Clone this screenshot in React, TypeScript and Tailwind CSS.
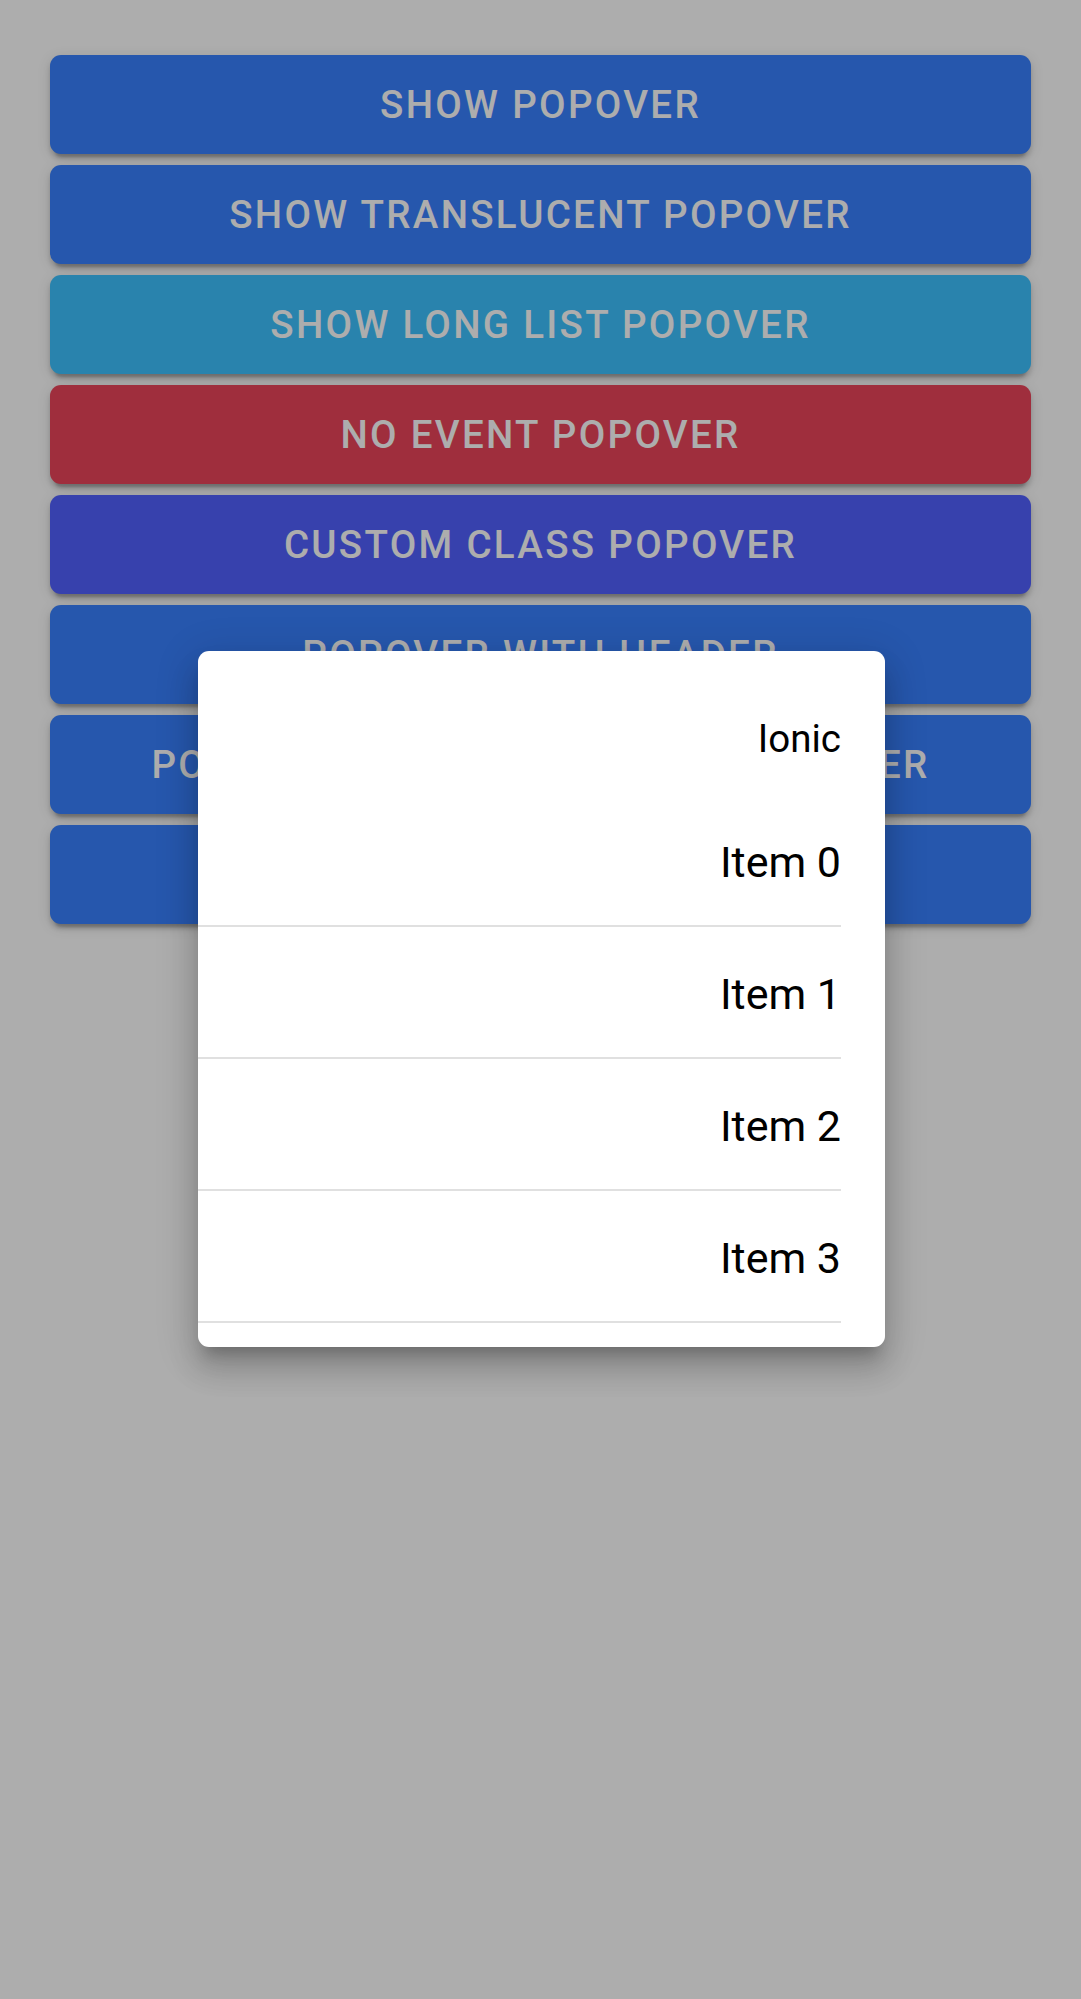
import React from "react";

type Btn = {
  label: string;
  color: string;
};

const buttons: Btn[] = [
  { label: "Show Popover", color: "bg-[#3880ff]" },
  { label: "Show Translucent Popover", color: "bg-[#3880ff]" },
  { label: "Show Long List Popover", color: "bg-[#3dc2ff]" },
  { label: "No Event Popover", color: "bg-[#eb445a]" },
  { label: "Custom Class Popover", color: "bg-[#5260ff]" },
  { label: "Popover With Header", color: "bg-[#3880ff]" },
  { label: "Popover With Translucent Header", color: "bg-[#3880ff]" },
  { label: "Popover With Textarea", color: "bg-[#3880ff]" },
];

// only the rows that show inside the popover before it is clipped
const items = ["Item 0", "Item 1", "Item 2", "Item 3", ""];

function PageButton({ label, color }: Btn) {
  return (
    <button
      className={`${color} h-[99px] w-full rounded-[11px] text-white uppercase font-medium text-[38.5px] tracking-[0.06em] shadow-[0_8px_3px_-5px_rgba(0,0,0,0.2),0_5px_5px_0_rgba(0,0,0,0.14),0_3px_14px_0_rgba(0,0,0,0.12)]`}
      style={{ fontFamily: "Roboto, 'Noto Sans', sans-serif" }}
    >
      {label}
    </button>
  );
}

function ListPopover() {
  return (
    <div
      className="absolute left-[198px] top-[651px] w-[687px] h-[696px] bg-white rounded-[11px] overflow-hidden shadow-[0_14px_14px_-8px_rgba(0,0,0,0.2),0_22px_28px_3px_rgba(0,0,0,0.14),0_8px_40px_6px_rgba(0,0,0,0.12)]"
      style={{ fontFamily: "Roboto, 'Noto Sans', sans-serif" }}
      dir="rtl"
    >
      {/* list header */}
      <div className="h-[144px] pr-[44px] pt-[66px] text-[38.5px] leading-[44px] text-black">Ionic</div>
      {items.map((item, i) => (
        <div key={i} className="h-[132px] flex">
          <div className="flex-1 mr-[44px] flex items-center pt-[5px] border-b-2 border-[#e0e0e0] text-[43px] text-black">
            {item}
          </div>
        </div>
      ))}
    </div>
  );
}

export default function App() {
  return (
    <div className="relative w-[1081px] h-[1999px] bg-white overflow-hidden">
      {/* page content */}
      <div className="flex flex-col gap-[11px] px-[50px] pt-[55px]">
        {buttons.map((b) => (
          <PageButton key={b.label} label={b.label} color={b.color} />
        ))}
      </div>

      {/* backdrop */}
      <div className="absolute inset-0 bg-black/[0.32]" />

      <ListPopover />
    </div>
  );
}
